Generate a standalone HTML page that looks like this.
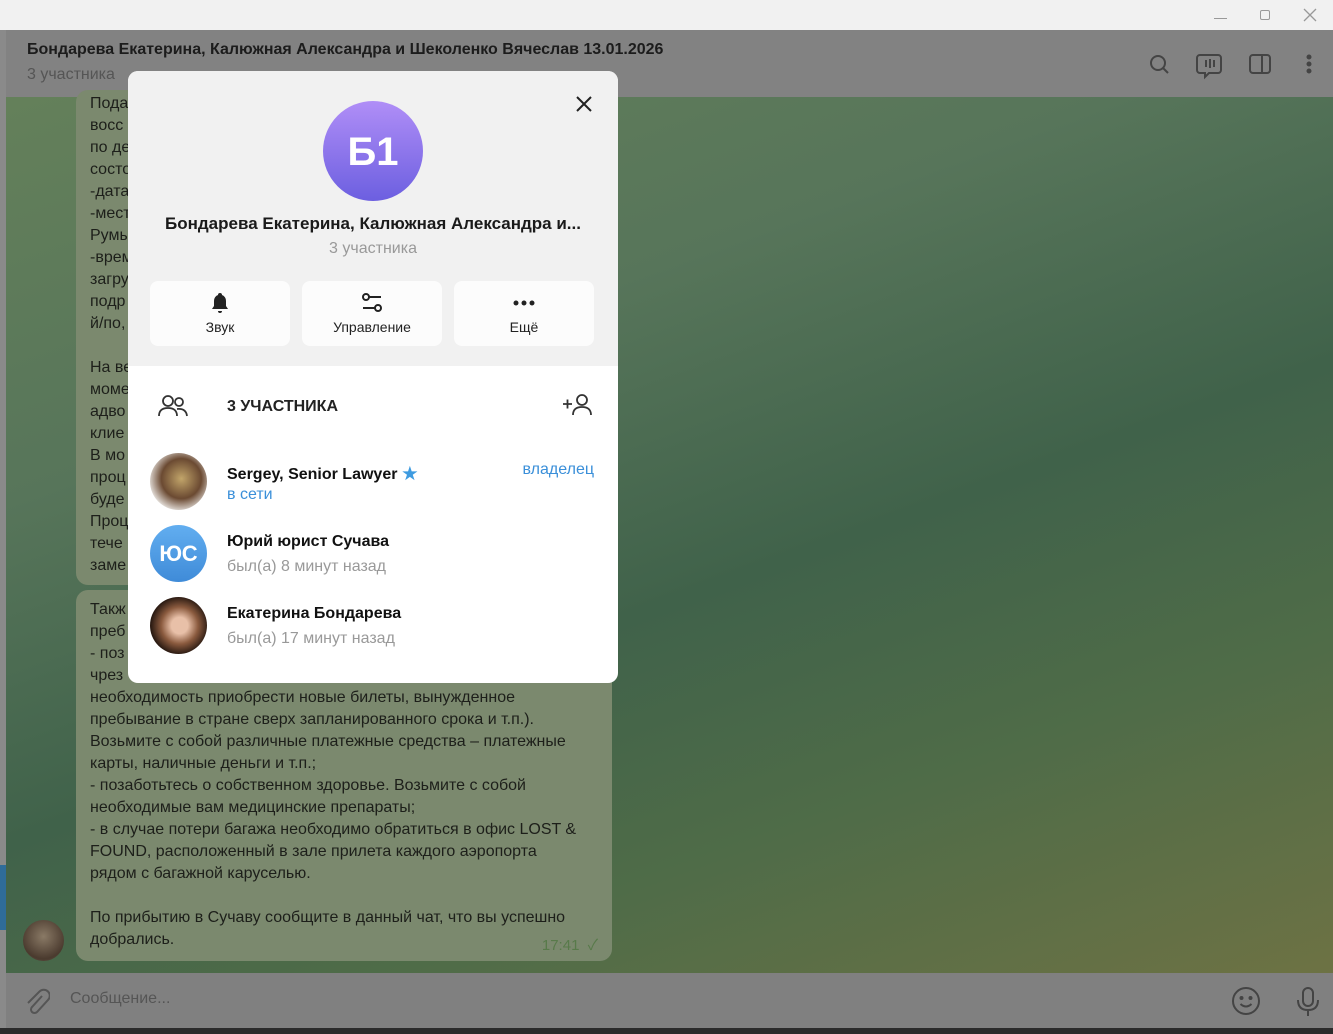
<!DOCTYPE html>
<html><head><meta charset="utf-8"><style>
*{margin:0;padding:0;box-sizing:border-box}
body{width:1333px;height:1034px;overflow:hidden;position:relative;font-family:"Liberation Sans","Noto Sans CJK SC",sans-serif;background:#808080}
.tb{position:absolute;left:0;top:0;width:1333px;height:30px;background:#f1f1f1}
.hdr{position:absolute;left:6px;top:30px;width:1327px;height:67px;background:#828282}
.left{position:absolute;left:0;top:30px;width:6px;height:998px;background:#8a8a8a}
.chat{position:absolute;left:6px;top:97px;width:1327px;height:876px;background:linear-gradient(160deg,#64805a 0%,#57755a 30%,#40624a 55%,#4f6c48 75%,#6d7244 100%)}
.inp{position:absolute;left:6px;top:973px;width:1327px;height:55px;background:#808080}
.bot{position:absolute;left:0;top:1028px;width:1333px;height:6px;background:#2b2b2b}
.bub{position:absolute;left:76px;width:536px;background:#7b896e;border-radius:12px;color:#1d1f1a;font-size:16px;line-height:22px;padding:0 14px}
.modal{position:absolute;left:128px;top:71px;width:490px;height:612px;background:#fff;border-radius:10px;overflow:hidden}
.mtop{position:absolute;left:0;top:0;width:490px;height:295px;background:#f1f1f1}
.btn{position:absolute;top:210px;width:140px;height:65px;background:#fcfcfc;border-radius:8px;text-align:center;font-size:14px;color:#222}
.btn span{position:absolute;left:0;right:0;top:38px}
.av{position:absolute;left:22px;width:57px;height:57px;border-radius:50%}
.nm{position:absolute;left:99px;font-size:16px;font-weight:bold;color:#111}
.st{position:absolute;left:99px;font-size:16px;color:#999}
</style></head><body>
<div class="tb">
<div style="position:absolute;left:1214px;top:18px;width:13px;height:1px;background:#999"></div>
<div style="position:absolute;left:1260px;top:10px;width:10px;height:10px;border:1px solid #999;border-radius:2px"></div>
<svg style="position:absolute;left:1303px;top:8px" width="14" height="14" stroke="#999" stroke-width="1.3"><path d="M1 1l12 12M13 1L1 13"/></svg>
</div>
<div class="left"></div>
<div class="hdr">
<div style="position:absolute;left:21px;top:11px;font-size:16px;font-weight:bold;color:#1c1c1c">Бондарева Екатерина, Калюжная Александра и Шеколенко Вячеслав 13.01.2026</div>
<div style="position:absolute;left:21px;top:36px;font-size:16px;color:#555">3 участника</div>
<svg style="position:absolute;left:1140px;top:20px" width="180" height="30" fill="none" stroke="#444" stroke-width="2">
<circle cx="12" cy="13" r="7"/><path d="M17 18l5 5"/>
<path d="M54 5h18a3 3 0 0 1 3 3v12a3 3 0 0 1-3 3h-9l-4 4v-4h-5a3 3 0 0 1-3-3V8a3 3 0 0 1 3-3z"/><path d="M60 10v7M64 9v9M68 10v7"/>
<rect x="104" y="5" width="20" height="18" rx="3"/><path d="M116 5v18"/>
<circle cx="163" cy="7" r="1.5" fill="#444"/><circle cx="163" cy="14" r="1.5" fill="#444"/><circle cx="163" cy="21" r="1.5" fill="#444"/>
</svg>
</div>
<div class="chat"></div>
<div class="bub" style="top:90px;height:495px;padding-top:3px">Пода<br>восс<br>по де<br>состо<br>-дата<br>-мест<br>Румы<br>-врем<br>загру<br>подр<br>й/по,<br><br>На ве<br>моме<br>адво<br>клие<br>В мо<br>проц<br>буде<br>Проц<br>тече<br>заме</div>
<div class="bub" style="top:590px;height:371px;padding-top:9px">Такж<br>преб<br>- поз<br>чрез<br>необходимость приобрести новые билеты, вынужденное<br>пребывание в стране сверх запланированного срока и т.п.).<br>Возьмите с собой различные платежные средства – платежные<br>карты, наличные деньги и т.п.;<br>- позаботьтесь о собственном здоровье. Возьмите с собой<br>необходимые вам медицинские препараты;<br>- в случае потери багажа необходимо обратиться в офис LOST &amp;<br>FOUND, расположенный в зале прилета каждого аэропорта<br>рядом с багажной каруселью.<br><br>По прибытию в Сучаву сообщите в данный чат, что вы успешно<br>добрались.
<div style="position:absolute;right:14px;bottom:4px;font-size:15px;color:#587a4a">17:41 &nbsp;✓</div></div>
<div style="position:absolute;left:23px;top:920px;width:41px;height:41px;border-radius:50%;background:radial-gradient(circle at 50% 40%,#8a7a66,#4a3a2e 70%,#6b5b4f)"></div>
<div style="position:absolute;left:0;top:865px;width:6px;height:65px;background:#2f6c99"></div>
<div class="inp">
<svg style="position:absolute;left:18px;top:15px" width="26" height="28" fill="none" stroke="#555" stroke-width="2"><path d="M18 8L8 19a3.5 3.5 0 0 0 5 5l11-12a6 6 0 0 0-8.5-8.5L4 15"/></svg>
<div style="position:absolute;left:64px;top:17px;font-size:16px;color:#555">Сообщение...</div>
<svg style="position:absolute;left:1226px;top:13px" width="90" height="32" fill="none" stroke="#444" stroke-width="2"><circle cx="14" cy="15" r="13"/><circle cx="9.5" cy="12" r="1" fill="#444"/><circle cx="18.5" cy="12" r="1" fill="#444"/><path d="M8.5 18q5.5 5 11 0"/><rect x="71" y="2" width="10" height="18" rx="5"/><path d="M66 14q0 10 10 10t10-10M76 24v6"/></svg>
</div>
<div class="bot"></div>
<div class="modal">
<div class="mtop"></div>
<svg style="position:absolute;left:448px;top:25px" width="16" height="16" stroke="#222" stroke-width="2"><path d="M1 1l14 14M15 1L1 15"/></svg>
<div style="position:absolute;left:195px;top:30px;width:100px;height:100px;border-radius:50%;background:linear-gradient(#b08ef7,#6c5fe0);color:#fff;font-size:40px;font-weight:bold;text-align:center;line-height:102px">Б1</div>
<div style="position:absolute;left:0;right:0;top:143px;text-align:center;font-size:17px;font-weight:bold;color:#1a1a1a">Бондарева Екатерина, Калюжная Александра и...</div>
<div style="position:absolute;left:0;right:0;top:169px;text-align:center;font-size:16px;color:#999">3 участника</div>
<div class="btn" style="left:22px"><svg style="position:absolute;left:58px;top:10px" width="24" height="24"><path d="M12 2a2 2 0 0 1 2 2 6 6 0 0 1 4 6v5l2 3H4l2-3v-5a6 6 0 0 1 4-6 2 2 0 0 1 2-2zM10 20h4a2 2 0 0 1-4 0z" fill="#222"/></svg><span>Звук</span></div>
<div class="btn" style="left:174px"><svg style="position:absolute;left:58px;top:10px" width="24" height="24" fill="none" stroke="#222" stroke-width="2"><circle cx="6" cy="6" r="3"/><path d="M9 6h12M3 17h12"/><circle cx="18" cy="17" r="3"/></svg><span>Управление</span></div>
<div class="btn" style="left:326px"><svg style="position:absolute;left:58px;top:10px" width="24" height="24" fill="#222"><circle cx="4" cy="12" r="2.5"/><circle cx="12" cy="12" r="2.5"/><circle cx="20" cy="12" r="2.5"/></svg><span>Ещё</span></div>
<svg style="position:absolute;left:30px;top:323px" width="30" height="24" fill="none" stroke="#333" stroke-width="1.8"><circle cx="10" cy="7" r="5"/><path d="M1 22q0-8 9-8t9 8"/><circle cx="21" cy="8" r="4"/><path d="M19 15q9-1 10 7"/></svg>
<div style="position:absolute;left:99px;top:327px;font-size:16px;font-weight:bold;color:#222">3 УЧАСТНИКА</div>
<svg style="position:absolute;left:434px;top:322px" width="30" height="24" fill="none" stroke="#333" stroke-width="1.8"><path d="M1 11h9M5.5 6.5v9"/><circle cx="20" cy="7" r="5"/><path d="M11 22q0-8 9-8t9 8"/></svg>
<div class="av" style="top:382px;background:radial-gradient(circle at 55% 45%,#c2a56a,#6b4a32 45%,#e8e4e0 75%)"></div>
<div class="nm" style="top:389px">Sergey, Senior Lawyer <span style="color:#3e9be0">★</span></div>
<div class="st" style="top:415px;color:#3a8fd9">в сети</div>
<div style="position:absolute;right:24px;top:390px;font-size:16px;color:#3a8fd9">владелец</div>
<div class="av" style="top:454px;background:linear-gradient(#62aef0,#3f8bd8);color:#fff;font-size:22px;font-weight:bold;text-align:center;line-height:57px">ЮС</div>
<div class="nm" style="top:462px">Юрий юрист Сучава</div>
<div class="st" style="top:487px">был(а) 8 минут назад</div>
<div class="av" style="top:526px;background:radial-gradient(circle at 52% 50%,#e8c0a8 20%,#8a5a3e 45%,#2a1a12 70%)"></div>
<div class="nm" style="top:534px">Екатерина Бондарева</div>
<div class="st" style="top:559px">был(а) 17 минут назад</div>
</div>
</body></html>
